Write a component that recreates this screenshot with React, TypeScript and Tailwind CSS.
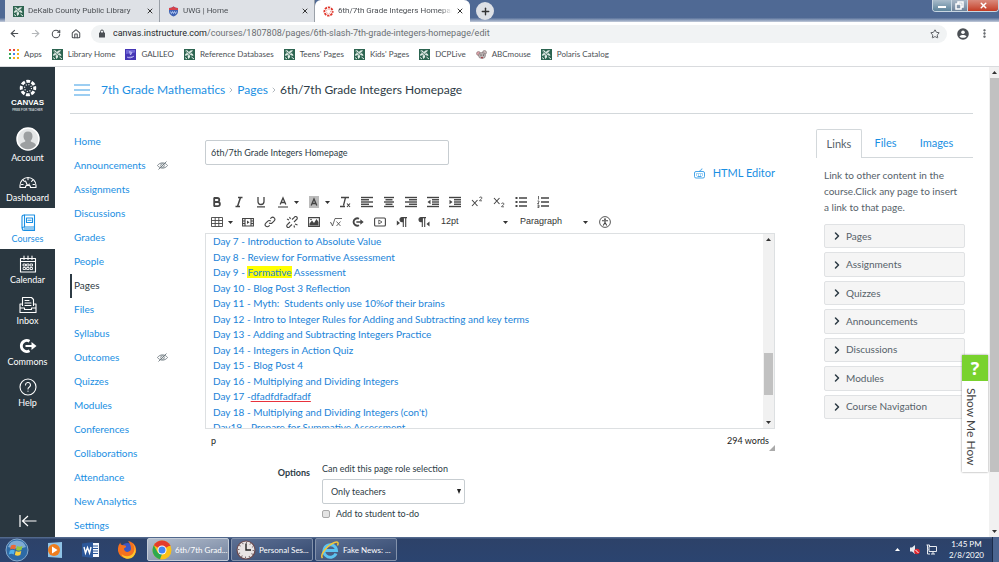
import type { ReactNode } from 'react'
import clsx from 'clsx'
import { ArrowLeft, ArrowRight, RotateCw, Home, Star, MoreVertical, X, Plus, ChevronRight } from 'lucide-react'

const BOOKMARKS = [
  { label: 'Apps',                icon: AppsIcon },
  { label: 'Library Home',        icon: LibraryIcon },
  { label: 'GALILEO',             icon: GalileoIcon },
  { label: 'Reference Databases', icon: LibraryIcon },
  { label: "Teens' Pages",        icon: LibraryIcon },
  { label: "Kids' Pages",         icon: LibraryIcon },
  { label: 'DCPLive',             icon: LibraryIcon },
  { label: 'ABCmouse',            icon: MouseIcon },
  { label: 'Polaris Catalog',     icon: LibraryIcon },
]

const TABS = [
  { title: 'DeKalb County Public Library',   icon: LibraryIcon, active: false },
  { title: 'UWG | Home',                     icon: ShieldIcon,  active: false },
  { title: '6th/7th Grade Integers Homepage', icon: RingIcon,   active: true },
]

const RAIL_ITEMS = [
  { label: 'Dashboard', icon: DashboardIcon },
  { label: 'Courses',   icon: CoursesIcon },
  { label: 'Calendar',  icon: CalendarIcon },
  { label: 'Inbox',     icon: InboxIcon },
  { label: 'Commons',   icon: CommonsIcon },
  { label: 'Help',      icon: HelpIcon },
]

const COURSE_NAV = [
  { label: 'Home' },
  { label: 'Announcements', hidden: true },
  { label: 'Assignments' },
  { label: 'Discussions' },
  { label: 'Grades' },
  { label: 'People' },
  { label: 'Pages' },
  { label: 'Files' },
  { label: 'Syllabus' },
  { label: 'Outcomes', hidden: true },
  { label: 'Quizzes' },
  { label: 'Modules' },
  { label: 'Conferences' },
  { label: 'Collaborations' },
  { label: 'Attendance' },
  { label: 'New Analytics' },
  { label: 'Settings' },
]

const DAYS: ReactNode[] = [
  'Day 7 - Introduction to Absolute Value',
  'Day 8 - Review for Formative Assessment',
  <>Day 9 - <mark className="bg-[#ffff00] text-inherit">Formative</mark> Assessment</>,
  'Day 10 - Blog Post 3 Reflection',
  'Day 11 - Myth:\u00a0 Students only use 10%of their brains',
  'Day 12 - Intro to Integer Rules for Adding and Subtracting and key terms',
  'Day 13 - Adding and Subtracting Integers Practice',
  'Day 14 - Integers in Action Quiz',
  'Day 15 - Blog Post 4',
  'Day 16 - Multiplying and Dividing Integers',
  <>Day 17 -<span className="underline decoration-[#e8323c]">dfadfdfadfadf</span></>,
  "Day 18 - Multiplying and Dividing Integers (con't)",
  'Day19 - Prepare for Summative Assessment',
]

const LINK_GROUPS = ['Pages', 'Assignments', 'Quizzes', 'Announcements', 'Discussions', 'Modules', 'Course Navigation']

/* ---------- favicons ---------- */

function LibraryIcon() {
  return (
    <svg className="size-[11px] shrink-0" viewBox="0 0 22 22">
      <rect width="22" height="22" fill="#2c6450" />
      <path d="M3 3c4-1 6 1 7 5 0-4 3-6 8-5-1 3-2 4-5 5 3 0 5 2 6 5-3 1-5 0-7-2 1 4 0 7-3 9-2-3-2-6-1-9-2 2-4 3-6 2 0-3 2-5 5-5-2-1-4-2-4-5z" fill="#e3ece7" />
      <path d="M4 4l13 14M18 4L9 12M11 20c1-4 3-5 8-4" stroke="#2c6450" strokeWidth="1.4" fill="none" />
      <path d="M15 16l5 4M2 17l4 3" stroke="#e3ece7" strokeWidth="2" />
    </svg>
  )
}

function GalileoIcon() {
  return (
    <svg className="size-[11px] shrink-0" viewBox="0 0 22 22">
      <rect width="22" height="22" fill="#4536b5" />
      <path d="M2 2h18v5L2 10z" fill="#6f66d6" />
      <path d="M4 16c4 3 10 2 14-2M9 5l5 2-3 5z" stroke="#c9c5f5" strokeWidth="1.6" fill="#8f88e6" />
    </svg>
  )
}

function MouseIcon() {
  return (
    <svg className="size-[11px] shrink-0" viewBox="0 0 22 22">
      <circle cx="5" cy="9" r="4" fill="#d9a3a8" stroke="#7a6064" />
      <circle cx="17" cy="7" r="4" fill="#c9b9ba" stroke="#6b6163" />
      <ellipse cx="12" cy="13" rx="7" ry="6" fill="#bdb4b4" stroke="#6b6163" />
      <circle cx="10" cy="12" r="1.2" fill="#333" />
      <circle cx="15" cy="12" r="1.2" fill="#333" />
      <path d="M10 17c2 1 3 1 4 0" stroke="#b0323b" strokeWidth="2" />
    </svg>
  )
}

function ShieldIcon() {
  return (
    <svg className="size-[11px] shrink-0" viewBox="0 0 22 22">
      <path d="M2 4c3 0 6-1 9-3 3 2 6 3 9 3v7c0 5-4 8-9 10-5-2-9-5-9-10z" fill="#3f63b4" />
      <path d="M2 4c3 0 6-1 9-3 3 2 6 3 9 3v4H2z" fill="#d6424b" />
      <path d="M5 11l2 4 2-4 2 4 2-4 2 4 2-4" stroke="#cfe0ff" strokeWidth="1.5" fill="none" />
    </svg>
  )
}

function Ring({ color }: { color: string }) {
  return (
    <>
      <circle cx="12" cy="12" r="9" fill="none" stroke={color} strokeWidth="4" strokeDasharray="5.1 1.97" strokeDashoffset="2.5" />
      <circle cx="12" cy="12" r="4.6" fill="none" stroke={color} strokeWidth="1.5" strokeDasharray="1.4 2.21" />
    </>
  )
}

function RingIcon() {
  return (
    <svg className="size-[11px] shrink-0" viewBox="0 0 24 24"><Ring color="#e0372c" /></svg>
  )
}

function AppsIcon() {
  const colors = ['#e8453c', '#e8453c', '#f2b01e', '#34a853', '#4285f4', '#f2b01e', '#34a853', '#f2b01e', '#f2b01e']
  return (
    <svg className="size-[10px] shrink-0" viewBox="0 0 10 10">
      {colors.map((c, i) => (
        <rect key={i} x={(i % 3) * 4} y={Math.floor(i / 3) * 4} width="2" height="2" fill={c} />
      ))}
    </svg>
  )
}

/* ---------- global nav icons ---------- */

function RailSvg({ children }: { children: ReactNode }) {
  return (
    <svg className="size-[18px]" viewBox="0 0 18 18" fill="none" stroke="currentColor" strokeWidth="1.1" strokeLinejoin="round" strokeLinecap="round">
      {children}
    </svg>
  )
}

function DashboardIcon() {
  return (
    <RailSvg>
      <path d="M1 14.500v-2a8 8 0 0 1 16 0v2h-5.500a2.500 2.500 0 0 0-5 0z" />
      <path d="M8.500 12.500L6.500 8M9 5v1.800M4.200 7.200l1.200 1.200M13.800 7.200l-1.200 1.200M2.500 11.500h1.600M14 11.500h1.500M9.500 12.500l.8-1.500" />
    </RailSvg>
  )
}

function CoursesIcon() {
  return (
    <RailSvg>
      <path d="M3 14V3a2 2 0 0 1 2-2h10.500v12H5a1.700 1.700 0 0 0 0 3.500h10.500V13M14.500 15H5" />
      <path d="M5.500 1v12M7.500 4h6v4.500h-6zM9 6.200h3" />
    </RailSvg>
  )
}

function CalendarIcon() {
  return (
    <RailSvg>
      <path d="M1.500 3.500h15v13.500h-15zM1.500 6.500h15M5 1v3.500M9 1v3.500M13 1v3.500" />
      <path d="M4.500 9h2v2h-2zM8 9h2v2H8zM11.500 9h2v2h-2zM4.500 12.500h2v2h-2zM8 12.500h2v2H8zM11.500 12.500h2v2h-2z" strokeWidth="0.9" />
    </RailSvg>
  )
}

function InboxIcon() {
  return (
    <RailSvg>
      <path d="M3.500 9.500v-8h9l2 2v6" />
      <path d="M1 16.500V8h1.500M15.500 8H17v8.500H1M1 12h4.500v1.500h7V12H17" />
      <path d="M6 4.500h4M6 7h6M6 9.500h6" />
    </RailSvg>
  )
}

function CommonsShape() {
  return (
    <>
      <path d="M10.500 4.200A5.500 5.500 0 1 0 10.500 13.800" fill="none" stroke="currentColor" strokeWidth="2.800" strokeLinecap="butt" />
      <path d="M6.500 7.900h6V5L17.500 9l-5 4v-2.900h-6z" fill="currentColor" stroke="none" />
    </>
  )
}

function CommonsIcon() {
  return <RailSvg><CommonsShape /></RailSvg>
}

function HelpIcon() {
  return (
    <RailSvg>
      <circle cx="9" cy="9" r="8" />
      <path d="M6.500 7a2.500 2.500 0 1 1 3.700 2.200C9.300 9.700 9 10 9 11M9 13v.2" />
    </RailSvg>
  )
}

function HiddenEye() {
  return (
    <svg className="h-[9px] w-[11px]" viewBox="0 0 22 18" fill="none" stroke="#6c777e" strokeWidth="1.800">
      <path d="M1 9c5-7 15-7 20 0-5 7-15 7-20 0z" />
      <circle cx="11" cy="9" r="3.500" />
      <path d="M3 17L19 1" />
    </svg>
  )
}

/* ---------- editor toolbar ---------- */

function Tool({ label, children }: { label: string; children: ReactNode }) {
  return (
    <button aria-label={label} className="flex h-5 w-[22px] items-center justify-center text-[#444]">
      {children}
    </button>
  )
}

function Caret() {
  return (
    <svg className="h-[3px] w-[5px] shrink-0" viewBox="0 0 5 3"><path d="M0 0h5L2.500 3z" fill="#333" /></svg>
  )
}

function CaretButton({ label }: { label: string }) {
  return (
    <button aria-label={label} className="flex h-5 w-[9px] items-center"><Caret /></button>
  )
}

function Glyph({ children }: { children: ReactNode }) {
  return (
    <svg className="size-3" viewBox="0 0 12 12" fill="none" stroke="currentColor" strokeWidth="1.100">
      {children}
    </svg>
  )
}

// each entry is [start, end] for one bar of the paragraph icon
function Bars({ rows, children }: { rows: number[][]; children?: ReactNode }) {
  return (
    <Glyph>
      {rows.map(([a, b], i) => <path key={i} d={`M${a} ${1.5 + i * 2.25}H${b}`} strokeWidth="1.400" />)}
      {children}
    </Glyph>
  )
}

function EditorToolbar() {
  return (
    <div className="mt-[11px]">
      <div className="flex pl-px">
        <div className="flex">
          <Tool label="Bold"><Glyph><path d="M3.200 1.500V10.500M3 2h3.300a2 2 0 0 1 0 4H3M3 6h3.800a2 2 0 0 1 0 4.200H3" strokeWidth="1.800" /></Glyph></Tool>
          <Tool label="Italic"><Glyph><path d="M5 1.500h4.500M2.500 10.500H7M7.500 1.500l-3 9" strokeWidth="1.500" /></Glyph></Tool>
          <Tool label="Underline"><Glyph><path d="M3 1v4.500a3 3 0 0 0 6 0V1M2 10.800h8" strokeWidth="1.300" /></Glyph></Tool>
        </div>
        <div className="flex">
          <Tool label="Text color"><Glyph><path d="M3.200 8.500L6 2l2.800 6.500M4.300 6.500h3.400" strokeWidth="1.300" /><path d="M1 11h10" /></Glyph></Tool>
          <CaretButton label="Text color choices" />
        </div>
        <div className="flex">
          <Tool label="Background color"><Glyph><path d="M1 0h10v12H1z" fill="#bbb" stroke="none" /><path d="M3.200 9.500L6 3l2.800 6.500M4.300 7.500h3.400" strokeWidth="1.300" /></Glyph></Tool>
          <CaretButton label="Background color choices" />
        </div>
        <div className="flex">
          <Tool label="Clear formatting"><Glyph><path d="M2 1.500h8M6.500 1.500l-2 8M1 10.500h5" strokeWidth="1.300" /><path d="M8 7.500l3 3.500M11 7.500L8 11" /></Glyph></Tool>
          <Tool label="Align left"><Bars rows={[[0, 12], [0, 8], [0, 12], [0, 8], [0, 12]]} /></Tool>
          <Tool label="Align center"><Bars rows={[[1, 11], [2.5, 9.5], [1, 11], [2.5, 9.5], [1, 11]]} /></Tool>
          <Tool label="Align right"><Bars rows={[[0, 12], [4, 12], [0, 12], [4, 12], [0, 12]]} /></Tool>
          <Tool label="Decrease indent"><Bars rows={[[0, 12], [5, 12], [5, 12], [5, 12], [0, 12]]}><path d="M3.500 3.800v4.400L0.500 6z" fill="currentColor" stroke="none" /></Bars></Tool>
          <Tool label="Increase indent"><Bars rows={[[0, 12], [5, 12], [5, 12], [5, 12], [0, 12]]}><path d="M0.500 3.800v4.400L3.500 6z" fill="currentColor" stroke="none" /></Bars></Tool>
        </div>
        <div className="flex">
          <Tool label="Superscript"><Glyph><path d="M1 4l5.500 6M6.500 4L1 10" /><path d="M8.500 2c0-1.400 2.500-1.400 2.500 0 0 1-2.500 1.800-2.500 2.800H11" strokeWidth="0.800" /></Glyph></Tool>
          <Tool label="Subscript"><Glyph><path d="M1 2l5.500 6M6.500 2L1 8" /><path d="M8.500 8c0-1.400 2.500-1.400 2.500 0 0 1-2.500 1.800-2.500 2.800H11" strokeWidth="0.800" /></Glyph></Tool>
        </div>
        <div className="flex">
          <Tool label="Bullet list"><Glyph><path d="M4 2h8M4 6h8M4 10h8" strokeWidth="1.500" /><path d="M.5 2h2M.5 6h2M.5 10h2" strokeWidth="2" /></Glyph></Tool>
          <Tool label="Numbered list"><Glyph><path d="M4 2h8M4 6h8M4 10h8" strokeWidth="1.500" /><path d="M1.500 0v3.500M.5 5h1.500v1.200L.5 7.500H2M.5 9H2v2.500H.5M.5 10.200H2" strokeWidth="0.800" /></Glyph></Tool>
        </div>
      </div>
      <div className="flex pl-px">
        <div className="flex">
          <Tool label="Table"><Glyph><path d="M.5 1.500h11v9H.5zM.5 4.500h11M.5 7.500h11M4.200 1.500v9M7.800 1.500v9" strokeWidth="0.900" /></Glyph></Tool>
          <CaretButton label="Table options" />
        </div>
        <div className="flex">
          <Tool label="Embed media"><Glyph><path d="M.6 2.500h10.800v7.500H.6zM3 2.500V10M9 2.500V10M.6 5H3M.6 7.500H3M9 5h2.400M9 7.500h2.400" /><path d="M5 4.500v3.500l2.500-1.700z" fill="currentColor" stroke="none" /></Glyph></Tool>
          <Tool label="Link"><Glyph><path d="M5.200 6.800a2 2 0 0 0 3 0l2-2a2 2 0 0 0-3-3L6.300 2.700M6.800 5.200a2 2 0 0 0-3 0l-2 2a2 2 0 0 0 3 3l.9-.9" /></Glyph></Tool>
          <Tool label="Remove link"><Glyph><path d="M4 6L1.500 8.500a1.600 1.600 0 1 0 2.200 2.200L6 8.500M8 6l2.500-2.500a1.600 1.600 0 1 0-2.200-2.200L6 3.500M1 3l2 1M3.500 1l1 2M8 9.500l.5 2M9 8l2.500 1" /></Glyph></Tool>
          <Tool label="Embed image"><Glyph><path d="M.6 1.600h10.800v8.800H.6z" /><path d="M1.500 9.500V7.500l2.500-3 2 2.500 2.500-4 2 3v3.500z" fill="currentColor" stroke="none" /><circle cx="3" cy="3.500" r=".8" fill="currentColor" stroke="none" /></Glyph></Tool>
          <Tool label="Insert math equation"><Glyph><path d="M0 7l1-.5L2.500 10 5 2.500h7M6.500 5.500L10.500 10M10.500 5.500L6.500 10" strokeWidth="0.800" /></Glyph></Tool>
          <Tool label="Commons favorites"><svg className="size-3" viewBox="0 0 18 18"><CommonsShape /></svg></Tool>
          <Tool label="Record media"><Glyph><rect x=".6" y="2" width="10.800" height="8" rx="1" /><path d="M4.800 4v4L8 6z" strokeWidth="0.800" /></Glyph></Tool>
          <Tool label="Left to right"><Glyph><path d="M11 1.600H6a2 2 0 0 0 0 4h1V2" fill="currentColor" /><path d="M7.300 1.500V11M9.700 1.500V11" /><path d="M.8 4.500v5L4 7z" fill="currentColor" stroke="none" /></Glyph></Tool>
          <Tool label="Right to left"><Glyph><path d="M8 1.600H3a2 2 0 0 0 0 4h1V2" fill="currentColor" /><path d="M4.300 1.500V11M6.700 1.500V11" /><path d="M11.500 5.500v5L8.500 8z" fill="currentColor" stroke="none" /></Glyph></Tool>
        </div>
        <button className="flex h-5 w-[79px] items-center justify-between px-[6px] font-['Liberation_Sans'] text-[9px] text-[#333]">
          12pt <Caret />
        </button>
        <button className="flex h-5 w-[80px] items-center justify-between px-[6px] font-['Liberation_Sans'] text-[9px] text-[#333]">
          Paragraph <Caret />
        </button>
        <Tool label="Check accessibility"><Glyph><circle cx="6" cy="6" r="5.400" strokeWidth="0.900" /><circle cx="6" cy="3.200" r=".9" fill="currentColor" stroke="none" /><path d="M3 4.800h6M6 4.800v2.200M6 6.500L4.200 9.500M6 6.500l1.800 3" /></Glyph></Tool>
      </div>
    </div>
  )
}

/* ---------- browser ---------- */

function Browser() {
  return (
    <header className="shrink-0 font-[Roboto,sans-serif] text-[#4b4f54]">
      <div className="flex h-[22px] justify-between bg-linear-to-b from-[#4f6994] from-80% to-[#c3cbda] pl-[5px]">
        <div className="flex min-w-0">
          {TABS.map(tab => (
            <div
              key={tab.title}
              className={clsx(
                'flex w-[155px] items-center gap-1 border-r pr-[5px] pl-2 text-[8px]',
                tab.active ? 'rounded-t-md border-white bg-white' : 'border-[#9aa0a8] bg-[#dee1e6]'
              )}
            >
              <tab.icon />
              <span className="min-w-0 flex-1 overflow-hidden mask-r-from-90% whitespace-nowrap">{tab.title}</span>
              <button aria-label="Close tab" className="shrink-0 text-[#333]"><X size={8} strokeWidth={3} /></button>
            </div>
          ))}
          <button aria-label="New tab" className="ml-[6px] mt-[2px] flex size-[18px] items-center justify-center rounded-full bg-[#dee1e6] text-[#333]">
            <Plus size={11} strokeWidth={3} />
          </button>
        </div>
        <div className="flex h-3 overflow-hidden rounded-b border border-t-0 border-[#c8d6e2]">
          <button aria-label="Minimize" className="flex w-[18px] items-end justify-center bg-linear-to-b from-[#a9bccb] to-[#5d849b] pb-[3px]">
            <span className="h-[2px] w-2 bg-white" />
          </button>
          <button aria-label="Restore" className="flex w-[17px] items-center justify-center border-x border-[#c8d6e2] bg-linear-to-b from-[#aab9c8] to-[#6d8299]">
            <svg className="size-[9px]" viewBox="0 0 9 9" fill="none" stroke="#fff" strokeWidth="1.500"><path d="M3 3V1h5v5H6M1 3h5v5H1z" /></svg>
          </button>
          <button aria-label="Close" className="flex w-[30px] items-center justify-center bg-linear-to-b from-[#d98a7c] to-[#c33a22] text-white">
            <X size={9} strokeWidth={4} />
          </button>
        </div>
      </div>

      <div className="flex h-[23px] items-center gap-[10px] bg-white px-[9px]">
        <button aria-label="Back"><ArrowLeft size={11} strokeWidth={2.5} /></button>
        <button aria-label="Forward" className="text-[#b4b7ba]"><ArrowRight size={11} strokeWidth={2.5} /></button>
        <button aria-label="Reload"><RotateCw size={10} strokeWidth={2.5} /></button>
        <button aria-label="Home page"><Home size={10} strokeWidth={2.5} /></button>
        <div className="flex h-[18px] min-w-0 flex-1 items-center rounded-full bg-[#f1f3f4] px-[7px]">
          <svg className="h-[9px] w-[8px]" viewBox="0 0 8 9"><rect x="1" y="3.500" width="6" height="5" rx=".6" fill="#4b4f54" /><path d="M2.500 4V2.500a1.500 1.500 0 0 1 3 0V4" fill="none" stroke="#4b4f54" /></svg>
          <p className="ml-[7px] flex-1 truncate text-[9px] text-[#6b6f73]">
            <span className="text-[#25282b]">canvas.instructure.com</span>/courses/1807808/pages/6th-slash-7th-grade-integers-homepage/edit
          </p>
          <button aria-label="Bookmark this page"><Star size={10} strokeWidth={2.2} /></button>
        </div>
        <button aria-label="Profile">
          <svg className="size-3" viewBox="0 0 12 12">
            <circle cx="6" cy="6" r="5.800" fill="#4b4f54" />
            <circle cx="6" cy="4.200" r="1.800" fill="#fff" />
            <path d="M2.500 8.500c1-2 6-2 7 0-1 1.700-6 1.700-7 0z" fill="#fff" />
          </svg>
        </button>
        <button aria-label="Menu"><MoreVertical size={11} strokeWidth={3} /></button>
      </div>

      <nav className="flex h-[22px] items-center gap-[10px] border-b border-[#d9dbde] bg-white px-[9px] pb-[3px] font-[Lato,sans-serif] text-[8px]">
        {BOOKMARKS.map(item => (
          <a key={item.label} href="#" className="flex items-center gap-[5px] whitespace-nowrap">
            <item.icon />
            {item.label}
          </a>
        ))}
      </nav>
    </header>
  )
}

/* ---------- canvas ---------- */

function GlobalNav() {
  return (
    <nav className="flex w-[55px] shrink-0 flex-col bg-[#2a3740] text-[9px] text-white">
      <a href="#" className="flex h-[57px] flex-col items-center pt-3 font-['Liberation_Sans']">
        <svg className="size-[18px]" viewBox="0 0 24 24"><Ring color="#fff" /></svg>
        <span className="mt-px text-[8px] leading-[10px] font-bold">CANVAS</span>
        <span className="text-[3px] leading-[5px] font-bold whitespace-nowrap text-[#c7cdd1]">FREE FOR TEACHER</span>
      </a>
      <a href="#" className="flex h-[43px] flex-col items-center pt-[3px]">
        <svg className="size-6" viewBox="0 0 24 24">
          <circle cx="12" cy="12" r="11" fill="#e4e6e7" stroke="#fff" strokeWidth="1.500" />
          <path d="M12 4.500c3 0 4.500 2 4.500 4.800 0 2-.9 3.700-2 4.700 1 1.500 4.500 1.300 5.500 4.300a10.200 10.200 0 0 1-16 0c1-3 4.500-2.800 5.500-4.300-1.100-1-2-2.700-2-4.700 0-2.800 1.500-4.800 4.500-4.800z" fill="#9c9fa1" />
        </svg>
        <span className="leading-[14px]">Account</span>
      </a>
      {RAIL_ITEMS.map(item => (
        <a
          key={item.label}
          href="#"
          className={clsx('flex h-[41px] flex-col items-center pt-[6px]', item.label === 'Courses' && 'bg-white text-[#1a8fe3]')}
        >
          <item.icon />
          <span className="leading-[14px]">{item.label}</span>
        </a>
      ))}
      <button aria-label="Minimize global navigation" className="mt-auto flex h-8 items-center justify-center">
        <svg className="h-3 w-[18px]" viewBox="0 0 18 12" fill="none" stroke="#fff" strokeWidth="1.200"><path d="M1 0v12M3.500 6H17.500M9 1L3.500 6 9 11" /></svg>
      </button>
    </nav>
  )
}

function CourseNav() {
  return (
    <nav className="mt-4 grid h-[407px] w-[135px] shrink-0 auto-rows-fr text-[10px] text-[#1a8fe3]">
      {COURSE_NAV.map(item => (
        <a
          key={item.label}
          href="#"
          className={clsx(
            'flex items-center justify-between border-l-2 pr-[37px] pl-[2px]',
            item.label === 'Pages' ? 'border-[#2d3b45] text-[#2d3b45]' : 'border-transparent'
          )}
        >
          {item.label}
          {item.hidden && <HiddenEye />}
        </a>
      ))}
    </nav>
  )
}

function PageEditor() {
  return (
    <main className="min-w-0 flex-1 pt-[26px] text-[10px]">
      <input
        aria-label="Page title"
        defaultValue="6th/7th Grade Integers Homepage"
        className="block h-[25px] w-[244px] rounded-xs border border-[#c7cdd1] px-[5px] text-[9px]"
      />
      <div className="flex h-4 justify-end">
        <a href="#" className="flex items-center gap-2 text-[11px] text-[#1a8fe3]">
          <svg className="size-[11px]" viewBox="0 0 22 22" fill="none" stroke="currentColor" strokeWidth="1.600">
            <rect x="1" y="7" width="20" height="13" rx="3" />
            <path d="M11 7c0-4 5-1 5-6M5 11h2M9 11h2M13 11h2M17 11h1M4 14h2M8 14h2M12 14h2M16 14h2M7 17h8" />
          </svg>
          HTML Editor
        </a>
      </div>

      <EditorToolbar />

      <div className="mt-px flex h-[196px] overflow-hidden border border-[#dde0e2]">
        <ul className="grid h-[202px] flex-1 auto-rows-fr pl-[7px] text-[#1a83d8]">
          {DAYS.map((day, i) => (
            <li key={i} className="h-0 leading-[15px] whitespace-nowrap"><a href="#">{day}</a></li>
          ))}
        </ul>
        <div className="flex w-[11px] flex-col items-center bg-[#f1f1f1] py-1">
          <div className="rotate-180"><Caret /></div>
          <div className="mt-28 h-[42px] w-[9px] bg-[#c1c1c1]" />
          <div className="mt-auto"><Caret /></div>
        </div>
      </div>
      <div className="flex h-[23px] justify-between pl-[6px] text-[9px] text-[#222]">
        <span className="self-center">p</span>
        <div className="flex">
          <span className="self-center">294 words</span>
          <svg className="mt-4 size-[6px]" viewBox="0 0 6 6"><path d="M6 0v6H0z" fill="#aaa" /></svg>
        </div>
      </div>

      <div className="mt-[10px] flex gap-3 text-[9px] leading-[14px]">
        <span className="w-[105px] pt-1 text-right font-bold">Options</span>
        <div>
          <label htmlFor="role" className="block">Can edit this page role selection</label>
          <div className="relative mt-[3px] w-[143px]">
            <select id="role" className="h-[25px] w-full appearance-none rounded-xs border border-[#c7cdd1] bg-white px-2">
              <option>Only teachers</option>
            </select>
            <svg className="pointer-events-none absolute top-[10px] right-1 h-[5px] w-1" viewBox="0 0 4 5"><path d="M0 0h4L2 5z" fill="#222" /></svg>
          </div>
          <label className="mt-[3px] flex items-center gap-[6px]">
            <input type="checkbox" className="size-2 appearance-none rounded-xs border border-[#a9a9a9] bg-[#e4e4e4]" />
            Add to student to-do
          </label>
        </div>
      </div>
    </main>
  )
}

function LinksPanel() {
  return (
    <aside className="ml-[41px] w-[157px] shrink-0 pt-[15px] text-[10px] text-[#56626a]">
      <div className="flex h-[29px] text-[11px]">
        <button className="w-[46px] rounded-t-xs border border-b-0 border-[#d3d8db]">Links</button>
        <div className="flex flex-1 items-center border-b border-[#d3d8db] text-[#1a8fe3]">
          <button className="w-[47px]">Files</button>
          <button className="w-[55px]">Images</button>
        </div>
      </div>
      <div className="px-2 pt-[9px]">
        <p className="pr-1 leading-4">Link to other content in the course.Click any page to insert a link to that page.</p>
        <div className="mt-[9px] grid h-[195px] auto-rows-fr gap-1">
          {LINK_GROUPS.map(group => (
            <button key={group} className="flex items-center gap-[3px] rounded-xs border border-[#e0e2e4] bg-[#f5f5f5] pl-[6px]">
              <ChevronRight size={12} strokeWidth={3} className="text-[#2d3b45]" />
              {group}
            </button>
          ))}
        </div>
      </div>
    </aside>
  )
}

function ShowMeHow() {
  return (
    <button className="absolute top-72 right-[11px] w-[26px] bg-white shadow-[0_0_2px_#888]">
      <span className="flex h-[26px] items-center justify-center bg-[#79d22e] font-['Open_Sans'] text-lg font-bold text-white">?</span>
      <span className="flex h-[91px] items-center justify-center text-[12px] text-[#444] [writing-mode:vertical-rl]">Show Me How</span>
    </button>
  )
}

/* ---------- taskbar ---------- */

function ChromeIcon() {
  return (
    <svg className="size-5" viewBox="0 0 20 20">
      <circle cx="10" cy="10" r="9.500" fill="#fbc116" />
      <path d="M10 10L1.800 5.200A9.500 9.500 0 0 1 18.200 5.300z" fill="#e33b2e" />
      <path d="M1.800 5.200L6 13l4 1-2 5.300A9.500 9.500 0 0 1 1.800 5.200z" fill="#2da94f" />
      <path d="M10 5.500h8.300" stroke="#e33b2e" strokeWidth="1" />
      <circle cx="10" cy="10" r="4.500" fill="#fff" />
      <circle cx="10" cy="10" r="3.500" fill="#4285f4" />
    </svg>
  )
}

function ClockIcon() {
  return (
    <svg className="size-5" viewBox="0 0 20 20">
      <circle cx="10" cy="10" r="9" fill="#e9e4e4" stroke="#6b4a4f" strokeWidth="1.200" />
      <circle cx="10" cy="10" r="7.300" fill="none" stroke="#5b4b4e" strokeWidth="1.500" strokeDasharray=".8 3.020" />
      <path d="M10 3.500V10h5" fill="none" stroke="#222" strokeWidth="1.400" />
    </svg>
  )
}

function ExplorerIcon() {
  return (
    <svg className="size-5" viewBox="0 0 20 20" fill="none">
      <path d="M16 13.500A6.300 6.300 0 1 1 16.500 10.500H5.500" stroke="#5cc4f2" strokeWidth="3" />
      <path d="M2.500 18c-3-3 5-13 12-15.500 4-1.500 4 1 3 3" stroke="#f4c63a" strokeWidth="1.500" />
    </svg>
  )
}

const WINDOWS = [
  { title: '6th/7th Grad...', icon: ChromeIcon,   active: true },
  { title: 'Personal Ses...', icon: ClockIcon,    active: false },
  { title: 'Fake News: ...',  icon: ExplorerIcon, active: false },
]

function Taskbar() {
  return (
    <footer className="flex h-[25px] shrink-0 items-center bg-linear-to-b from-[#5b7296] via-[#2d4269] via-10% to-[#2b4470] font-[Lato,sans-serif] text-[8px] text-white">
      <div className="flex w-[147px] items-center justify-between pr-[10px] pl-[5px]">
        <button aria-label="Start">
          <svg className="size-6" viewBox="0 0 24 24">
            <circle cx="12" cy="12" r="11" fill="#2d6aa6" stroke="#86a9cb" />
            <path d="M3 9a9.500 9.500 0 0 1 18 0c-6 2-12 2-18 0z" fill="#7fabd3" />
            <path d="M6 7.500c2-1 3.500-1 5 0l-1 4c-1.500-1-3-1-5 0z" fill="#ec6a35" />
            <path d="M12 8c2 1 3.500 1 5.500 0l-1 4c-2 1-3.500 1-5.500 0z" fill="#93c83f" />
            <path d="M4.800 12.500c2-1 3.500-1 5 0l-1 4c-1.500-1-3-1-5 0z" fill="#4fb2ec" />
            <path d="M10.800 13c2 1 3.500 1 5.500 0l-1 4c-2 1-3.500 1-5.500 0z" fill="#fbd13f" />
          </svg>
        </button>
        <button aria-label="Media player">
          <svg className="size-[18px]" viewBox="0 0 18 18">
            <path d="M2 2l14-1v16L2 16z" fill="#8fc3e6" />
            <circle cx="8" cy="9" r="6" fill="#ef7d1e" />
            <path d="M6 5.500v7l5.500-3.500z" fill="#fff" />
          </svg>
        </button>
        <button aria-label="Word">
          <svg className="size-[18px]" viewBox="0 0 18 18">
            <path d="M9 2h8v14H9z" fill="#f5f8fc" />
            <path d="M10.500 5H16M10.500 7.500H16M10.500 10H16M10.500 12.500H16" stroke="#2b579a" />
            <path d="M0 2.500L11 1v16L0 15.500z" fill="#2b579a" />
            <path d="M2 6l1.500 6L5.500 6.500 7.500 12 9 6" fill="none" stroke="#fff" strokeWidth="1.400" />
          </svg>
        </button>
        <button aria-label="Firefox">
          <svg className="size-5" viewBox="0 0 20 20">
            <circle cx="10.500" cy="10" r="7" fill="#3b57c4" />
            <path d="M3.500 2.500C3 5 5 5 8 5.500c2 .5 1 2-1 3C7 12 11 13 13.500 10.500 15 8 13 3 11 1c6 1 9 6 8 11a9.300 9.300 0 0 1-18-1C.500 7 2 4 3.500 2.500z" fill="#f5711f" />
            <path d="M14.500 2.500c3.500 3 4 8 1 11.500-3 3-8 3-11 0 1 4 6 6 10 4 5-3 6-11 0-15.500z" fill="#fcc62d" />
          </svg>
        </button>
      </div>
      <div className="flex flex-1 gap-[2px]">
        {WINDOWS.map(win => (
          <button
            key={win.title}
            className={clsx(
              'flex h-[23px] w-[82px] items-center gap-[3px] rounded-xs border pl-1 whitespace-nowrap',
              win.active
                ? 'border-[#c4ccd8] bg-linear-to-br from-[#b3bdcc] to-[#7484a0]'
                : 'border-[#8392ab] bg-linear-to-br from-[#5d7094] to-[#34496f]'
            )}
          >
            <win.icon />
            {win.title}
          </button>
        ))}
      </div>
      <div className="flex h-full items-center">
        <svg className="h-[3px] w-[5px]" viewBox="0 0 5 3"><path d="M0 3h5L2.500 0z" fill="#fff" /></svg>
        <svg className="ml-[9px] size-[11px]" viewBox="0 0 11 11">
          <path d="M1 3.500h2L6 1v9L3 7.500H1z" fill="#e8ebf0" />
          <circle cx="8" cy="7.500" r="2.800" fill="#e0262d" />
          <path d="M6.500 6l3 3" stroke="#fff" />
        </svg>
        <svg className="ml-[6px] size-[11px]" viewBox="0 0 11 11" fill="none" stroke="#e8ebf0">
          <path d="M3 2.500h7.500v5H3zM5 10h4M7 7.500V10M1.500 1v4.500h1M.5 1h3v2M1.500 5.500V10H4" />
        </svg>
        <div className="mr-2 ml-3 text-center leading-[11px]">
          <p>1:45 PM</p>
          <p>2/8/2020</p>
        </div>
        <div className="h-full w-[7px] border-l border-[#1b2c4a] bg-[#4b6590]" />
      </div>
    </footer>
  )
}

export default function App() {
  return (
    <div className="flex h-screen flex-col overflow-hidden bg-white">
      <Browser />
      <div className="relative flex min-h-0 flex-1 overflow-hidden font-[Lato,sans-serif] text-[#2d3b45]">
        <GlobalNav />
        <div className="min-w-0 flex-1 pr-4 pl-[15px]">
          <div className="flex h-[47px] items-center border-b border-[#d3d8db] pl-1 text-[12px]">
            <button aria-label="Toggle course navigation">
              <svg className="h-3 w-4" viewBox="0 0 16 12"><path d="M0 1h16M0 6h16M0 11h16" stroke="#3b9de6" strokeWidth="1.200" /></svg>
            </button>
            <nav className="ml-[11px] flex items-center gap-[2px] text-[#1a8fe3]">
              <a href="#">7th Grade Mathematics</a>
              <ChevronRight size={8} className="text-[#8b969e]" />
              <a href="#">Pages</a>
              <ChevronRight size={8} className="text-[#8b969e]" />
              <span className="text-[#2d3b45]">6th/7th Grade Integers Homepage</span>
            </nav>
          </div>
          <div className="flex">
            <CourseNav />
            <PageEditor />
            <LinksPanel />
          </div>
        </div>
        <div className="flex w-[10px] shrink-0 flex-col items-center bg-[#f1f1f1] py-1">
          <div className="rotate-180"><Caret /></div>
          <div className="mt-1 h-[394px] w-[9px] bg-[#c1c1c1]" />
          <div className="mt-auto"><Caret /></div>
        </div>
        <ShowMeHow />
      </div>
      <Taskbar />
    </div>
  )
}
